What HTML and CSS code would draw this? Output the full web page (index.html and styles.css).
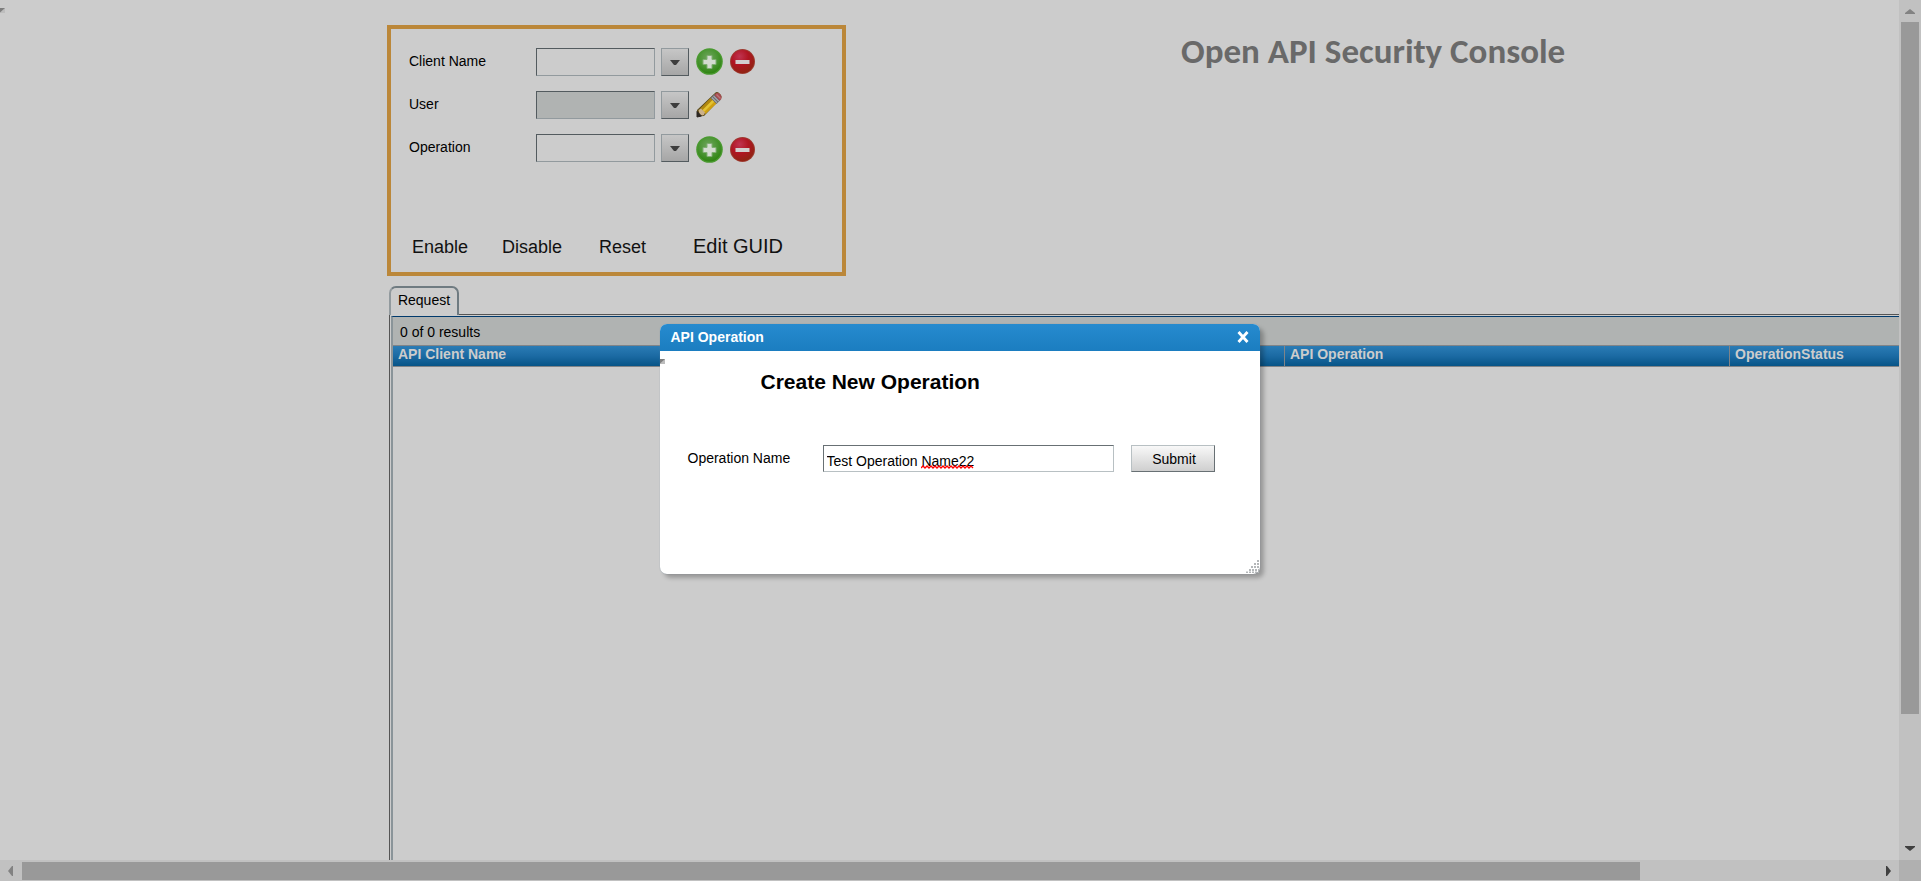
FILE: index.html
```html
<!DOCTYPE html>
<html lang="en">
<head>
<meta charset="utf-8">
<title>Open API Security Console</title>
<link rel="stylesheet" href="styles.css">
</head>
<body>
<svg class="defs" width="0" height="0" aria-hidden="true">
  <defs>
    <radialGradient id="green" cx="45%" cy="35%" r="65%">
      <stop offset="0" stop-color="#6fa55c"/><stop offset=".55" stop-color="#4d9636"/><stop offset="1" stop-color="#2f8412"/>
    </radialGradient>
    <radialGradient id="red" cx="38%" cy="28%" r="75%">
      <stop offset="0" stop-color="#bf3450"/><stop offset=".5" stop-color="#b01522"/><stop offset="1" stop-color="#8f2412"/>
    </radialGradient>
    <symbol id="add" viewBox="0 0 27 27">
      <circle cx="13.5" cy="13.5" r="13.3" fill="#4a9a30"/>
      <circle cx="13.5" cy="13.5" r="12" fill="url(#green)"/>
      <path d="M11 7.500h5v4h4v5h-4v4h-5v-4h-4v-5h4z" fill="#d3dbd0" stroke="#7fae72" stroke-width="1"/>
    </symbol>
    <symbol id="remove" viewBox="0 0 27 27">
      <circle cx="13.500" cy="13.500" r="12.500" fill="#9d3a30"/>
      <circle cx="13.500" cy="13.500" r="11.500" fill="url(#red)"/>
      <rect x="6.500" y="12" width="14" height="4" fill="#d2cfcf"/>
    </symbol>
    <symbol id="pencil" viewBox="0 0 27 27">
      <path d="M1 25.500V19L19 2q2-2 4.500.5 3 2.500 1.500 5L8 25z" fill="#5d4c18"/>
      <path d="M4.500 17.500 15 7 20.500 12.500 9.500 23z" fill="#cfa011"/>
      <path d="M4.500 17.500 15 7 17 9 6.500 19.500z" fill="#b0860f"/>
      <path d="M6.500 19 16.500 9 18.300 10.800 8.300 20.800z" fill="#e3c334"/>
      <path d="M14.500 7 18.500 3 24.500 9 20.500 13z" fill="#6b6e73"/>
      <path d="M15.800 6.500 21 11.700M17.500 4.800 22.700 10" stroke="#a5a9ae" stroke-width="1.200"/>
      <path d="M19 3q2.500-2.500 5 0t1 5.500l-1.500 1-5-5z" fill="#a34a4e"/>
      <path d="M20.500 3.500l4 4" stroke="#bd7477" stroke-width="1.500"/>
      <path d="M2.500 19 5 17.500 9 21.500 8 24 4 25z" fill="#ccb18a"/>
      <path d="M1 20.500 5.500 25 1 26z" fill="#2c2622" stroke="#2c2622"/>
    </symbol>
    <symbol id="caret" viewBox="0 0 10 6">
      <path d="M0 1h10L6 6H4z" fill="currentColor"/>
    </symbol>
    <symbol id="corner" viewBox="0 0 5 5">
      <path d="M0 0h5v5H0z" fill="#bdbdbd"/><path d="M0 0h5L0 4.500z" fill="#7d7d7d"/>
    </symbol>
  </defs>
</svg>

<div class="window">
  <main class="page">
    <svg class="page-corner" width="5" height="5"><use href="#corner"/></svg>
    <header class="top">
      <form class="filters">
        <div class="field">
          <label for="client">Client Name</label>
          <input id="client" type="text">
          <button type="button" class="drop" aria-label="Choose client"><svg width="10" height="6"><use href="#caret"/></svg></button>
          <button type="button" class="icon" aria-label="Add client"><svg width="27" height="27"><use href="#add"/></svg></button>
          <button type="button" class="icon" aria-label="Remove client"><svg width="27" height="27"><use href="#remove"/></svg></button>
        </div>
        <div class="field">
          <label for="user">User</label>
          <input id="user" type="text" disabled>
          <button type="button" class="drop" aria-label="Choose user"><svg width="10" height="6"><use href="#caret"/></svg></button>
          <button type="button" class="icon" aria-label="Edit user"><svg width="27" height="27"><use href="#pencil"/></svg></button>
        </div>
        <div class="field field-low">
          <label for="operation">Operation</label>
          <input id="operation" type="text">
          <button type="button" class="drop" aria-label="Choose operation"><svg width="10" height="6"><use href="#caret"/></svg></button>
          <button type="button" class="icon" aria-label="Add operation"><svg width="27" height="27"><use href="#add"/></svg></button>
          <button type="button" class="icon" aria-label="Remove operation"><svg width="27" height="27"><use href="#remove"/></svg></button>
        </div>
        <div class="actions">
          <button type="button">Enable</button>
          <button type="button">Disable</button>
          <button type="button">Reset</button>
          <button type="button" class="wide">Edit GUID</button>
        </div>
      </form>
      <h1>Open API Security Console</h1>
    </header>

    <section class="results">
      <div class="tabs">
        <button type="button" class="tab">Request</button>
      </div>
      <div class="sheet">
        <div class="sheet-body">
          <div class="count">0 of 0 results</div>
          <table>
            <colgroup><col class="col-client"><col class="col-operation"><col></colgroup>
            <thead><tr><th>API Client Name</th><th>API Operation</th><th>OperationStatus</th></tr></thead>
          </table>
        </div>
      </div>
    </section>
  </main>

  <div class="bar bar-v">
    <svg class="faded" width="22" height="22"><path d="M6 14v-1l5-4 5 4v1z" fill="currentColor"/></svg>
    <div class="track"><div class="thumb"></div></div>
    <svg width="22" height="22"><path d="M6 8h10v1l-5 4-5-4z" fill="currentColor"/></svg>
  </div>
  <div class="bar bar-h">
    <svg class="faded" width="22" height="21"><path d="M13 6h-1l-4 5 4 5h1z" fill="currentColor"/></svg>
    <div class="track"><div class="thumb"></div></div>
    <svg width="22" height="21"><path d="M9 6h1l4 5-4 5h-1z" fill="currentColor"/></svg>
  </div>
  <div class="bar-corner"></div>
</div>

<div class="dialog" role="dialog" aria-labelledby="dialog-title">
  <div class="dialog-bar">
    <span id="dialog-title">API Operation</span>
    <button type="button" class="close" aria-label="Close"><svg width="12" height="12"><path d="M1.500 1 10.500 11M10.500 1 1.500 11" stroke="#fff" stroke-width="2.800"/></svg></button>
  </div>
  <svg class="dialog-corner" width="5" height="5"><use href="#corner"/></svg>
  <h2>Create New Operation</h2>
  <form class="dialog-form">
    <label for="name">Operation Name</label>
    <div class="name-box">
      <input id="name" type="text" value="Test Operation Name22" spellcheck="false">
      <svg class="squiggle" width="53" height="4"><path d="M0 3l2-2 2 2 2-2 2 2 2-2 2 2 2-2 2 2 2-2 2 2 2-2 2 2 2-2 2 2 2-2 2 2 2-2 2 2 2-2 2 2 2-2 2 2 2-2 2 2 2-2 2 2" fill="none" stroke="#f00" stroke-width="1.300"/></svg>
    </div>
    <button type="button" class="submit">Submit</button>
  </form>
  <svg class="grip" width="13" height="13"><path d="M11 1h2M8 4h5M5 7h8M3 10h10M0 12.500h13" stroke="#b4b7b9" stroke-width="2" stroke-dasharray="2 1"/></svg>
</div>
</body>
</html>
```

FILE: styles.css
```css
* { box-sizing: border-box; }

body {
  margin: 0;
  background: #ccc;
  color: #000;
  font: 14px/16px "Liberation Sans", Arial, sans-serif;
}

button, input { font: inherit; color: inherit; }
button { padding: 0; border: 0; background: none; }
svg { display: block; }
.defs { position: absolute; }

.window {
  display: grid;
  grid-template-columns: minmax(0, 1fr) 22px;
  grid-template-rows: minmax(0, 1fr) 21px;
  height: 100vh;
}

.page {
  position: relative;
  display: flex;
  flex-direction: column;
  gap: 10px;
  padding: 25px 0 0 387px;
  overflow: hidden;
}
.page-corner { position: absolute; left: 0; top: 8px; }

.top { display: flex; align-items: flex-start; }

.filters {
  display: flex;
  flex-direction: column;
  gap: 15px;
  width: 459px;
  padding: 19px 18px 13px;
  border: 4px solid #bb8739;
}
.field { display: flex; height: 28px; }
.field label { width: 127px; padding-top: 5px; }
.field input {
  width: 119px;
  height: 28px;
  margin-right: 6px;
  padding: 0 4px;
  background: #ccc;
  border: 1px solid;
  border-color: #535b5f #929a9e #929a9e #535b5f;
}
.field input:disabled { background: #b0b3b2; }
.drop {
  display: grid;
  place-items: center;
  width: 28px;
  height: 28px;
  margin-right: 7px;
  color: #3d3d3d;
  background: linear-gradient(#c6c6c6, #a6a6a6);
  border: 1px solid;
  border-color: #929a9e #535b5f #535b5f #929a9e;
}
.icon { height: 27px; margin-right: 6px; }
.field-low .icon { margin-top: 2px; }

.actions {
  display: grid;
  grid-template-columns: 90px 97px 94px auto;
  align-items: baseline;
  margin-top: 57px;
  padding-left: 3px;
  font-size: 18px;
  line-height: 24px;
}
.actions button { text-align: left; color: #111; }
.actions .wide { font-size: 20px; }

h1 {
  margin: 6px 0 0 335px;
  color: #696969;
  font: bold 35px/40px Carlito, Lato, sans-serif;
  white-space: nowrap;
}

.results {
  display: flex;
  flex: 1;
  flex-direction: column;
  margin-left: 2px;
}
.tab {
  position: relative;
  height: 29px;
  width: 70px;
  margin-bottom: -1px;
  padding-bottom: 3px;
  background: #ccc;
  border: 2px solid;
  border-color: #6f7b81 #6f7b81 #ccc #929a9e;
  border-bottom: 0;
  border-radius: 7px 7px 0 0;
}
.tabs { display: flex; }
.sheet {
  flex: 1;
  padding: 1px 0 0 1px;
  border: solid #555;
  border-width: 1px 0 0 1px;
}
.sheet-body {
  height: 100%;
  border-top: 1px solid #003a6d;
  border-left: 2px solid #8a9499;
}
.count {
  height: 28px;
  padding: 7px 7px 0;
  background: #b0b3b2;
}
table {
  width: 100%;
  table-layout: fixed;
  border-collapse: separate;
  border-spacing: 0;
}
.col-client { width: 892px; }
.col-operation { width: 445px; }
th {
  height: 22px;
  padding: 0 5px 4px;
  text-align: left;
  color: #ccc;
  background: linear-gradient(#2b7cb5, #1b6aa3 50%, #075487);
  border: solid #808488;
  border-width: 1px 1px 1px 0;
}
th:last-child { border-right: 0; }

.bar { display: flex; background: #c1c1c1; color: #404040; }
.bar .faded { color: #828282; }
.bar-v { flex-direction: column; }
.track { flex: 1; }
.thumb { background: #999; }
.bar-v .thumb { width: 18px; height: 84.8%; margin: 0 2px; }
.bar-h .thumb { width: 87.2%; height: 18px; margin: 2px 0; }
.bar-corner { background: #b0b0b0; }

.dialog {
  position: absolute;
  left: calc(50% - 301px);
  top: 324px;
  width: 600px;
  height: 250px;
  background: #fff;
  border-radius: 7px;
  box-shadow: 4px 4px 4px rgba(0, 0, 0, .25), 0 0 1px #7f93a1;
}
.dialog-bar {
  display: flex;
  align-items: center;
  justify-content: space-between;
  height: 27px;
  padding: 0 11px 1px;
  color: #fff;
  font-weight: bold;
  background: linear-gradient(#268bcf, #1b7dc0);
  border-radius: 7px 7px 0 0;
}
.dialog-corner { position: absolute; left: 0; top: 35px; }
h2 {
  margin: 18px 0 0 101px;
  font-size: 21px;
  line-height: 26px;
}
.dialog-form {
  display: flex;
  align-items: center;
  margin: 50px 0 0 28px;
}
.dialog-form label { width: 135px; padding-bottom: 2px; }
.name-box { position: relative; width: 291px; margin-right: 17px; }
.name-box input {
  display: block;
  width: 100%;
  height: 27px;
  padding: 4px 3px 0;
  background: #fff;
  border: 1px solid;
  border-color: #687074 #b8c0c3 #b8c0c3 #687074;
}
.squiggle { position: absolute; left: 98px; top: 20px; }
.submit {
  width: 84px;
  height: 27px;
  padding-left: 3px;
  background: linear-gradient(#f8f8f8, #cfcfcf);
  border: 1px solid;
  border-color: #b8c0c3 #687074 #687074 #b8c0c3;
}
.grip { position: absolute; right: 1px; bottom: 1px; }
```
